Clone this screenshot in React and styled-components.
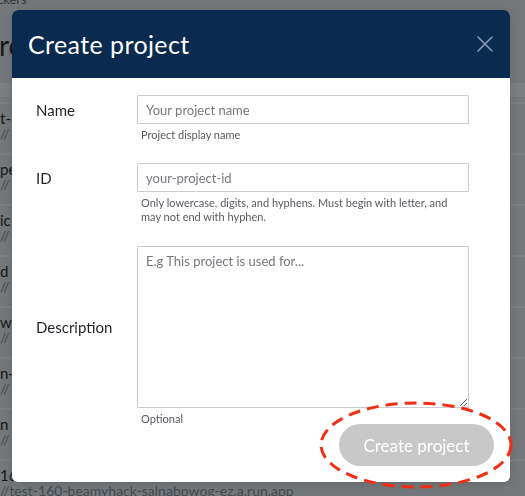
import React from "react";
import styled, { createGlobalStyle } from "styled-components";

const Global = createGlobalStyle`
  html, body { margin: 0; padding: 0; }
  body {
    width: 525px; height: 496px; overflow: hidden;
    font-family: "Lato", "Noto Sans", sans-serif;
    background: #74787b;
  }
  * { box-sizing: border-box; }
`;

/* ---------- dimmed page behind the dialog ---------- */
const Page = styled.div`
  height: 496px;
  overflow: hidden;
  background: #74787b;
  display: flex;
  flex-direction: column;
  & > * { flex-shrink: 0; }
`;

const Crumb = styled.div`
  font-size: 13px;
  line-height: 14px;
  margin-top: -8px;
  margin-left: ${(p) => p.$shift}px;
  color: #34373a;
  white-space: nowrap;
`;

const Heading = styled.div`
  font-size: 28px;
  line-height: 34px;
  margin-top: 22px;
  margin-left: ${(p) => p.$shift}px;
  color: #16181a;
  white-space: nowrap;
`;

const HeadBand = styled.div`
  height: 14px;
  margin-top: 21px;
  background: #7b7f82;
`;

const List = styled.div`
  margin-top: 5px;
  display: flex;
  flex-direction: column;
`;

const Row = styled.div`
  height: 51px;
  flex-shrink: 0;
  border-top: 2px solid #7b7f82;
  padding-top: 6px;
  display: flex;
  flex-direction: column;
  white-space: nowrap;
`;

const RowName = styled.div`
  font-size: 15px;
  line-height: 16px;
  color: #141618;
`;

const RowUrl = styled.div`
  font-size: 14px;
  line-height: 15px;
  color: #45494c;
`;

/* ---------- dialog ---------- */
const Overlay = styled.div`
  position: fixed;
  inset: 0;
  display: flex;
  align-items: flex-start;
  padding: 10px 0 0 12px;
`;

const Modal = styled.div`
  position: relative;
  width: 498px;
  background: #ffffff;
  border-radius: 6px;
  box-shadow: 0 2px 10px rgba(0, 0, 0, 0.15);
`;

const Header = styled.div`
  height: 68px;
  background: #0b2a4f;
  border-radius: 6px 6px 0 0;
  display: flex;
  align-items: center;
  justify-content: space-between;
  padding: 0 17px 0 16px;
`;

const Title = styled.h2`
  margin: 0;
  font-size: 25px;
  font-weight: 400;
  color: #ffffff;
  letter-spacing: 0.4px;
`;

const CloseButton = styled.button`
  border: 0;
  background: transparent;
  padding: 0;
  width: 16px;
  height: 16px;
  display: flex;
  align-items: center;
  justify-content: center;
  cursor: pointer;
`;

const Body = styled.div`
  padding: 17px 41px 0 24px;
  display: flex;
  flex-direction: column;
`;

const Field = styled.div`
  display: grid;
  grid-template-columns: 101px 1fr;
  row-gap: 4px;
  margin-top: ${(p) => p.$gap || 0}px;
`;

const Label = styled.label`
  grid-column: 1;
  grid-row: 1;
  align-self: center;
  font-size: 15px;
  color: #1f2328;
`;

const Input = styled.input`
  grid-column: 2;
  grid-row: 1;
  height: ${(p) => p.$h}px;
  border: 1px solid #c9ccd1;
  border-radius: 1px;
  padding: 0 8px;
  font-family: inherit;
  font-size: 13px;
  color: #222;
  outline: none;
  &::placeholder { color: #74777c; }
`;

const TextArea = styled.textarea`
  grid-column: 2;
  grid-row: 1;
  height: 162px;
  border: 1px solid #c9ccd1;
  border-radius: 1px;
  padding: 6px 8px;
  font-family: inherit;
  font-size: 13px;
  color: #222;
  outline: none;
  resize: both;
  &::placeholder { color: #74777c; }
`;

const Helper = styled.div`
  grid-column: 2;
  grid-row: 2;
  padding-left: 4px;
  font-size: 11px;
  line-height: 14px;
  color: #575a5f;
`;

const Footer = styled.div`
  display: flex;
  justify-content: flex-end;
  margin-top: -2px;
  padding: 0 16px 16px 0;
`;

const PrimaryButton = styled.button`
  width: 155px;
  height: 42px;
  border: 0;
  border-radius: 21px;
  background: #c8c8c8;
  color: #ffffff;
  font-family: inherit;
  font-size: 17px;
  cursor: not-allowed;
`;

const Annotation = styled.svg`
  position: absolute;
  left: 307px;
  top: 391px;
  pointer-events: none;
  overflow: visible;
`;

const rows = [
  { name: "t-", url: "//" },
  { name: "pe", url: "//" },
  { name: "ic", url: "//" },
  { name: "d", url: "//" },
  { name: "w", url: "//" },
  { name: "n-", url: "//" },
  { name: "n", url: "//" },
  { name: "16", url: "//test-160-beamyhack-salnabpwog-ez.a.run.app" },
];

export default function App() {
  return (
    <>
      <Global />
      <Page>
        <Crumb $shift={-3}>ckers</Crumb>
        <Heading $shift={-1}>ro</Heading>
        <HeadBand />
        <List>
          {rows.map((r, i) => (
            <Row key={i}>
              <RowName>{r.name}</RowName>
              <RowUrl>{r.url}</RowUrl>
            </Row>
          ))}
        </List>
      </Page>

      <Overlay>
        <Modal>
          <Header>
            <Title>Create project</Title>
            <CloseButton aria-label="Close">
              <svg width="16" height="16" viewBox="0 0 16 16">
                <path d="M1 1 L15 15 M15 1 L1 15" stroke="#8a9cb2" strokeWidth="1.6" strokeLinecap="round" />
              </svg>
            </CloseButton>
          </Header>
          <Body>
            <Field>
              <Label>Name</Label>
              <Input $h={29} placeholder="Your project name" />
              <Helper>Project display name</Helper>
            </Field>
            <Field $gap={21}>
              <Label>ID</Label>
              <Input $h={29} placeholder="your-project-id" />
              <Helper>
                Only lowercase, digits, and hyphens. Must begin with letter, and
                <br />
                may not end with hyphen.
              </Helper>
            </Field>
            <Field $gap={22}>
              <Label>Description</Label>
              <TextArea placeholder="E.g This project is used for..." />
              <Helper>Optional</Helper>
            </Field>
          </Body>
          <Footer>
            <PrimaryButton disabled>Create project</PrimaryButton>
          </Footer>
          <Annotation width="196" height="88" viewBox="0 0 196 88">
            <ellipse cx="97" cy="44" rx="95" ry="42" fill="none" stroke="#ef2e14" strokeWidth="3" strokeDasharray="12 7" />
          </Annotation>
        </Modal>
      </Overlay>
    </>
  );
}
